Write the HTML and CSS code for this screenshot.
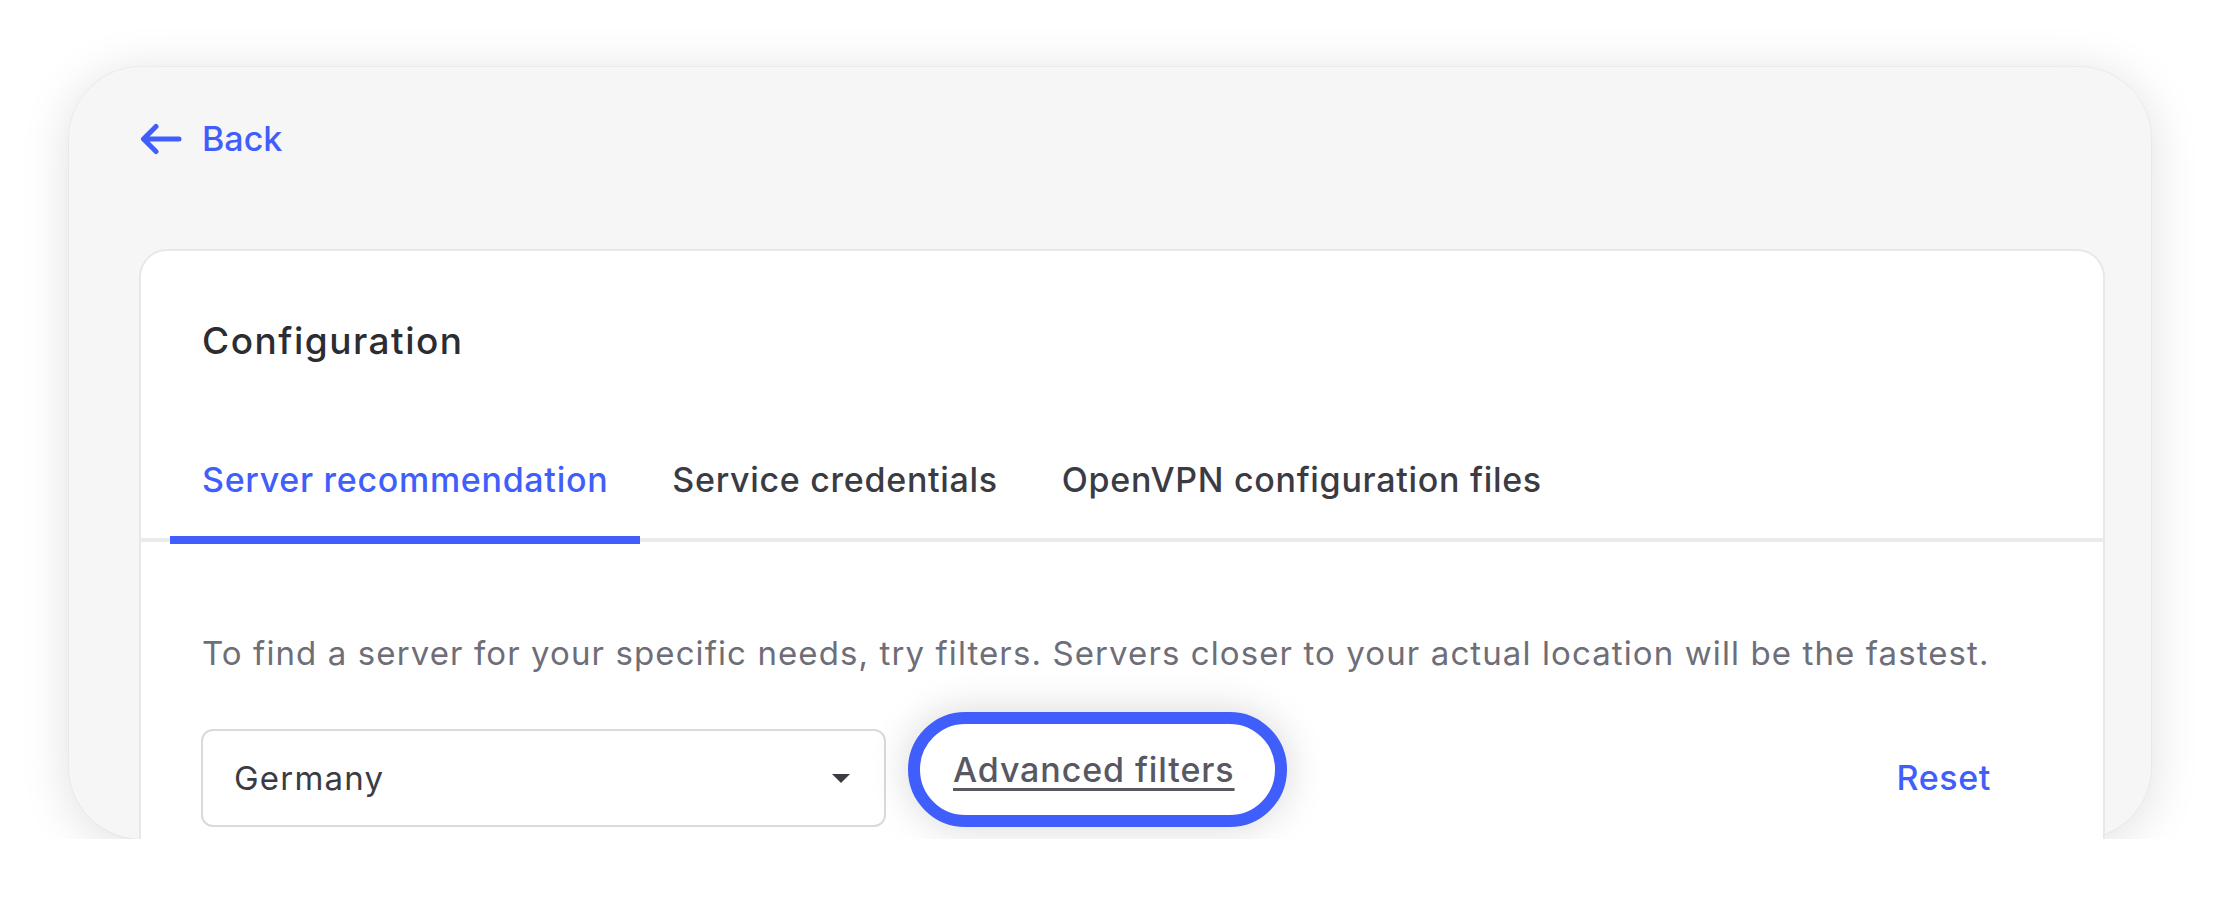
FILE: index.html
```html
<!DOCTYPE html>
<html lang="en">
<head>
<meta charset="utf-8">
<title>Configuration</title>
<link rel="stylesheet" href="styles.css">
</head>
<body>
<div class="frame">
  <a class="back" href="#">
    <svg class="back-icon" viewBox="0 0 42 32" width="42" height="32" aria-hidden="true">
      <path d="M39 16H4M16 3.5L3.5 16L16 28.5" fill="none" stroke="currentColor" stroke-width="5" stroke-linecap="round" stroke-linejoin="round"/>
    </svg>
    <span>Back</span>
  </a>
  <section class="card">
    <h2 class="card-title">Configuration</h2>
    <nav class="tabs">
      <a class="tab active" href="#">Server recommendation</a>
      <a class="tab" href="#">Service credentials</a>
      <a class="tab" href="#">OpenVPN configuration files</a>
    </nav>
    <div class="panel">
      <p class="desc">To find a server for your specific needs, try filters. Servers closer to your actual location will be the fastest.</p>
      <div class="filters">
        <div class="select">
          <span class="select-value">Germany</span>
          <span class="caret"></span>
        </div>
        <a class="adv" href="#"><span>Advanced filters</span></a>
        <a class="reset" href="#">Reset</a>
      </div>
    </div>
  </section>
</div>
</body>
</html>
```

FILE: styles.css
```css
* { box-sizing: border-box; }

html, body {
  margin: 0;
  padding: 0;
  background: #ffffff;
  font-family: Inter, "Noto Sans", sans-serif;
}

.frame {
  margin: 67px 0 0 69px;
  width: 2082px;
  height: 772px;
  background: #f6f6f6;
  border-radius: 72px;
  box-shadow: 0 6px 50px rgba(0, 0, 0, 0.13), 0 0 0 1px rgba(0, 0, 0, 0.03);
  display: flex;
  flex-direction: column;
  padding: 50px 46px 0 70px;
}

.back {
  display: flex;
  align-items: center;
  gap: 20px;
  height: 44px;
  color: #3f5efb;
  text-decoration: none;
  font-size: 34px;
  font-weight: 500;
  line-height: 44px;
  align-self: flex-start;
  padding-left: 1px;
}

.back-icon { display: block; }

.card {
  margin-top: 88px;
  flex: 1;
  background: #ffffff;
  border: 2px solid #e8e8e8;
  border-bottom: none;
  border-radius: 28px 28px 0 0;
  display: flex;
  flex-direction: column;
}

.card-title {
  margin: 68px 0 0 61px;
  font-size: 37px;
  font-weight: 500;
  letter-spacing: 1.5px;
  line-height: 44px;
  color: #2c2c33;
}

.tabs {
  display: flex;
  margin-top: 71px;
  padding-left: 29px;
  border-bottom: 4px solid #ebebeb;
}

.tab {
  position: relative;
  padding: 24px 32px 36px 32px;
  font-size: 34px;
  font-weight: 500;
  letter-spacing: 0.7px;
  line-height: 44px;
  color: #3b3b43;
  text-decoration: none;
}

.tab.active { color: #3f5efb; }

.tab.active::after {
  content: "";
  position: absolute;
  left: 0;
  right: 0;
  bottom: -6px;
  height: 8px;
  background: #3f5efb;
}

.panel {
  padding: 89px 112px 0 61px;
}

.desc {
  margin: 0;
  font-size: 33px;
  letter-spacing: 1.1px;
  line-height: 44px;
  color: #6e6e78;
  white-space: nowrap;
}

.filters {
  display: flex;
  align-items: flex-start;
  margin-top: 37px;
}

.select {
  margin-top: 17px;
  margin-left: -1px;
  width: 685px;
  height: 98px;
  border: 2px solid #d9d9de;
  border-radius: 12px;
  background: #ffffff;
  display: flex;
  align-items: center;
  justify-content: space-between;
  padding: 0 34px 0 31px;
}

.select-value {
  font-size: 33px;
  letter-spacing: 1.2px;
  line-height: 44px;
  color: #3b3b43;
}

.caret {
  width: 0;
  height: 0;
  border-left: 9px solid transparent;
  border-right: 9px solid transparent;
  border-top: 9px solid #3b3b43;
}

.adv {
  margin-left: 22px;
  width: 379px;
  height: 115px;
  border: 12px solid #3f5efb;
  border-radius: 58px;
  background: #ffffff;
  box-shadow: 0 0 40px rgba(0, 0, 0, 0.16);
  display: flex;
  align-items: center;
  padding-left: 33px;
  color: #585862;
  font-size: 34px;
  font-weight: 500;
  letter-spacing: 0.9px;
  line-height: 44px;
  text-decoration: underline;
  text-decoration-thickness: 3px;
  text-underline-offset: 6px;
}

.reset {
  margin-left: auto;
  margin-top: 44px;
  font-size: 34px;
  font-weight: 500;
  letter-spacing: 0.6px;
  line-height: 44px;
  color: #3f5efb;
  text-decoration: none;
}
```
